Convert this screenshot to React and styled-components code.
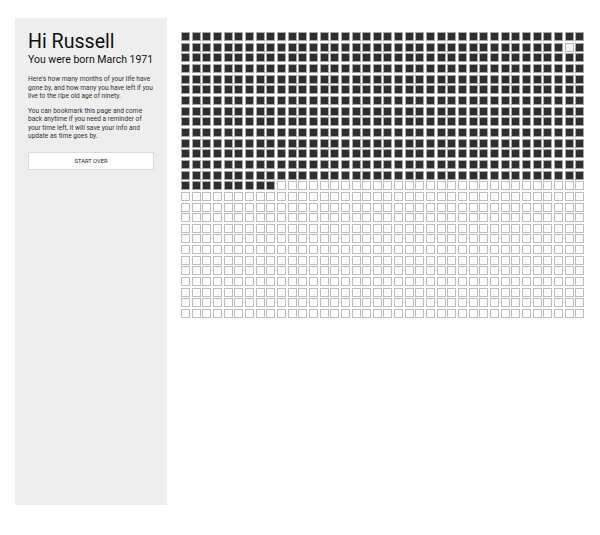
import styled, { createGlobalStyle } from "styled-components";

const GlobalStyle = createGlobalStyle`
  html, body {
    margin: 0;
    padding: 0;
    background: #fff;
  }
  body {
    font-family: Roboto, "Liberation Sans", Arial, sans-serif;
    color: #222;
  }
`;

const Page = styled.div`
  display: flex;
  align-items: flex-start;
  padding: 18px 15px;
  width: 600px;
  box-sizing: border-box;
`;

const Sidebar = styled.aside`
  width: 152px;
  height: 487px;
  box-sizing: border-box;
  padding: 12px 13px;
  background: #eeeeee;
  flex-shrink: 0;
`;

const Greeting = styled.h1`
  margin: 0;
  font-size: 19.6px;
  font-weight: 400;
  line-height: normal;
  color: #111;
`;

const Born = styled.h2`
  margin: 0 0 9px;
  font-size: 10.5px;
  font-weight: 400;
  line-height: normal;
  white-space: nowrap;
  color: #111;
`;

const Text = styled.p`
  margin: 0 0 6.3px;
  font-size: 6.62px;
  line-height: 8.5px;
  color: #333;
`;

const Button = styled.button`
  display: block;
  width: 126px;
  height: 18px;
  margin-top: 11px;
  padding: 0;
  background: #fff;
  border: 1px solid #dcdcdc;
  font-family: inherit;
  font-size: 5.8px;
  text-transform: uppercase;
  color: #222;
  cursor: pointer;
`;

const Grid = styled.div`
  display: grid;
  grid-template-columns: repeat(38, 9px);
  gap: 1.667px;
  margin: 14px 0 0 14px;
`;

const Month = styled.div`
  width: 9px;
  height: 9px;
  box-sizing: border-box;
  border: 1px solid ${(p) => (p.$lived ? "#a8a8a8" : "#bdbdbd")};
  background: ${(p) => (p.$lived ? "#2f2f2f" : p.$now ? "#f2f2f2" : "#fff")};
`;

const COLUMNS = 38;
const ROWS = 27;
const LIVED = 14 * COLUMNS + 9;
const CURRENT = COLUMNS + 36;

function App() {
  const months = Array.from({ length: COLUMNS * ROWS }, (_, i) => i);

  return (
    <>
      <GlobalStyle />
      <Page>
        <Sidebar>
          <Greeting>Hi Russell</Greeting>
          <Born>You were born March 1971</Born>
          <Text>
            Here's how many months of your life have gone by, and how many you
            have left if you live to the ripe old age of ninety.
          </Text>
          <Text>
            You can bookmark this page and come back anytime if you need a
            reminder of your time left, it will save your info and update as
            time goes by.
          </Text>
          <Button>Start over</Button>
        </Sidebar>
        <Grid>
          {months.map((i) => (
            <Month key={i} $lived={i < LIVED && i !== CURRENT} $now={i === CURRENT} />
          ))}
        </Grid>
      </Page>
    </>
  );
}

export default App;
